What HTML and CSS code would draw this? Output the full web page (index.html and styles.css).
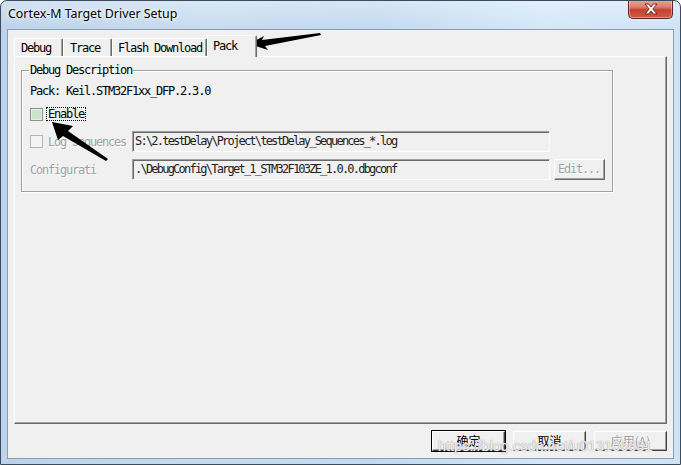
FILE: index.html
```html
<!DOCTYPE html>
<html>
<head>
<meta charset="utf-8">
<link rel="stylesheet" href="styles.css">
</head>
<body>
<div class="window">
  <div class="titlebar">
    <span class="title">Cortex-M Target Driver Setup</span>
    <div class="close">
      <svg width="16" height="12" viewBox="0 0 16 12"><path d="M2 1h3.5L8 4l2.5-3H14L9.8 6 14 11h-3.5L8 8l-2.5 3H2l4.2-5z" fill="#fff" stroke="#6b2a22" stroke-width="1"/></svg>
    </div>
  </div>
  <div class="client">
    <div class="tabs">
      <div class="tab">Debug</div>
      <div class="tab">Trace</div>
      <div class="tab">Flash Download</div>
      <div class="tab active">Pack</div>
    </div>
    <div class="panel">
      <fieldset class="gb">
        <legend>Debug Description</legend>
        <div class="pack">Pack: Keil.STM32F1xx_DFP.2.3.0</div>
        <div class="row enable-row">
          <span class="cb cb-green"></span>
          <span class="focus">Enable</span>
        </div>
        <div class="row field-row">
          <div class="lbl"><span class="cb cb-dis"></span><span class="dis">Log Sequences</span></div>
          <div class="edit">S:\2.testDelay\Project\testDelay_Sequences_*.log</div>
        </div>
        <div class="row field-row cfg-row">
          <div class="lbl"><span class="dis">Configurati</span></div>
          <div class="edit">.\DebugConfig\Target_1_STM32F103ZE_1.0.0.dbgconf</div>
          <div class="btn-edit">Edit...</div>
        </div>
      </fieldset>
    </div>
    <div class="buttons">
      <div class="btn default">确定</div>
      <div class="btn">取消</div>
      <div class="btn disabled">应用(<u>A</u>)</div>
    </div>
  </div>
  <svg class="arrows" width="681" height="465" viewBox="0 0 681 465">
    <polygon points="249,44 264,36 262,40 320,33 321,35 265,46 268,50" fill="#000"/>
    <polygon points="52,122 73,126 68,131 108,159 106,161 63,136 58,140" fill="#000"/>
  </svg>
  <div class="watermark">https://blog.csdn.net/u013106631</div>
</div>
</body>
</html>
```
FILE: styles.css
```css
html, body {
  margin: 0;
  padding: 0;
  background: #ffffff;
}
.window {
  position: relative;
  width: 681px;
  height: 465px;
  box-sizing: border-box;
  border: 1px solid #3b4a5c;
  border-radius: 7px 7px 0 0;
  overflow: hidden;
  display: flex;
  flex-direction: column;
  background:
    linear-gradient(180deg, rgba(255,255,255,0.35) 0px, rgba(255,255,255,0) 28px),
    linear-gradient(90deg, #bcd3ea 0%, #c6dbef 30%, #c2d9f0 55%, #d3e7f8 80%, #cfe3f6 100%);
}
.titlebar {
  height: 28px;
  flex: none;
  display: flex;
  justify-content: space-between;
  align-items: flex-start;
}
.title {
  font-family: "Noto Sans", sans-serif;
  font-size: 12.4px;
  line-height: 16px;
  padding: 5px 0 0 7px;
  color: #000;
  text-shadow: 0 0 6px rgba(255,255,255,0.9), 0 0 3px #fff;
}
.close {
  width: 45px;
  height: 19px;
  margin: -1px 7px 0 0;
  box-sizing: border-box;
  border: 1px solid #5b2a26;
  border-top: none;
  border-radius: 0 0 5px 5px;
  background: linear-gradient(180deg, #e9a899 0%, #d67d6b 40%, #c4412f 55%, #cf5b45 100%);
  box-shadow: inset 0 0 0 1px rgba(255,255,255,0.35);
  display: flex;
  align-items: center;
  justify-content: center;
}
.client {
  flex: 1;
  margin: 0 6px 5px 6px;
  box-sizing: border-box;
  border: 1px solid #8a9db3;
  background: #f0f0f0;
  padding: 5px 6px 0 6px;
  display: flex;
  flex-direction: column;
  font-family: "DejaVu Sans Mono", "Liberation Mono", monospace;
  font-size: 12px;
  letter-spacing: -1.22px;
  color: #000;
}
.tabs {
  height: 21px;
  display: flex;
  align-items: flex-end;
  position: relative;
  z-index: 2;
}
.tab {
  height: 18px;
  box-sizing: border-box;
  padding: 3px 0 0 6px;
  line-height: 13px;
  border-left: 1px solid #fff;
  border-top: 1px solid #fff;
  border-right: 1px solid #696969;
  box-shadow: inset -1px 0 0 #a0a0a0;
  background: #f0f0f0;
  border-radius: 2px 2px 0 0;
  white-space: nowrap;
  overflow: hidden;
}
.tab:nth-child(1) { width: 49px; }
.tab:nth-child(2) { width: 49px; }
.tab:nth-child(3) { width: 95px; padding-left: 5px; }
.tab.active {
  width: 50px;
  height: 22px;
  margin-bottom: -1px;
  padding: 4px 0 0 5px;
}
.panel {
  height: 368px;
  box-sizing: border-box;
  border-left: 1px solid #fff;
  border-top: 1px solid #fff;
  border-right: 1px solid #696969;
  border-bottom: 1px solid #696969;
  box-shadow: inset -1px -1px 0 #a0a0a0;
  padding: 7px 0 0 6px;
}
.gb {
  width: 592px;
  box-sizing: border-box;
  margin: 0;
  padding: 0 0 11px 8px;
  border: 1px solid #a0a0a0;
  box-shadow: 1px 1px 0 #fff, inset 1px 1px 0 #fff;
  min-width: 0;
}
.gb legend {
  padding: 0 1px;
  margin-left: -1px;
  line-height: 12px;
  font-size: 12px;
}
.pack {
  margin-top: 8px;
  height: 14px;
  line-height: 14px;
}
.row {
  display: flex;
  align-items: center;
}
.enable-row {
  margin-top: 9px;
  height: 14px;
}
.cb {
  width: 13px;
  height: 13px;
  box-sizing: border-box;
  flex: none;
  display: inline-block;
}
.cb-green {
  border: 1px solid #8e8f8f;
  background: #c8e6cb;
  box-shadow: inset 0 0 0 1px #e3f1e4;
}
.cb-dis {
  border: 1px solid #b5b5b5;
  background: #f4f4f4;
}
.focus {
  margin-left: 4px;
  padding: 0 1px;
  line-height: 12px;
  outline: 1px dotted #000;
  outline-offset: 0;
}
.field-row {
  margin-top: 10px;
  height: 21px;
  align-items: stretch;
}
.cfg-row {
  margin-top: 7px;
}
.lbl {
  width: 102px;
  flex: none;
  display: flex;
  align-items: center;
  gap: 5px;
  white-space: nowrap;
}
.dis {
  color: #a0a0a0;
  text-shadow: 1px 1px 0 #fff;
}
.edit {
  width: 418px;
  box-sizing: border-box;
  border-top: 1px solid #a0a0a0;
  border-left: 1px solid #a0a0a0;
  border-right: 1px solid #fff;
  border-bottom: 1px solid #fff;
  box-shadow: inset 1px 1px 0 #696969;
  padding: 0 0 0 2px;
  line-height: 19px;
  color: #222;
  letter-spacing: -1.78px;
  white-space: nowrap;
  overflow: hidden;
}
.btn-edit {
  margin-left: 4px;
  width: 51px;
  box-sizing: border-box;
  border-top: 1px solid #fff;
  border-left: 1px solid #fff;
  border-right: 1px solid #696969;
  border-bottom: 1px solid #696969;
  box-shadow: inset -1px -1px 0 #a0a0a0;
  line-height: 19px;
  padding-left: 3px;
  color: #a0a0a0;
  text-shadow: 1px 1px 0 #fff;
}
.buttons {
  display: flex;
  justify-content: flex-end;
  gap: 8px;
  margin-top: 7px;
}
.btn {
  width: 73px;
  height: 20px;
  box-sizing: border-box;
  border-top: 1px solid #fff;
  border-left: 1px solid #fff;
  border-right: 1px solid #404040;
  border-bottom: 1px solid #404040;
  box-shadow: inset -1px -1px 0 #a0a0a0;
  font-family: "Noto Sans CJK SC", sans-serif;
  font-size: 12px;
  letter-spacing: 0;
  line-height: 17px;
  text-align: center;
  color: #000;
}
.btn.default {
  outline: 1px solid #000;
}
.btn.disabled {
  color: #a0a0a0;
  text-shadow: 1px 1px 0 #fff;
}
.arrows {
  position: absolute;
  left: -1px;
  top: -1px;
  pointer-events: none;
}
.watermark {
  position: absolute;
  left: 437px;
  top: 437px;
  font-family: "Liberation Sans", sans-serif;
  font-size: 14.5px;
  color: rgba(255,255,255,0.85);
  text-shadow: 0 0 1px #9a9a9a, 0 0 1px #b0b0b0;
  pointer-events: none;
}
```
